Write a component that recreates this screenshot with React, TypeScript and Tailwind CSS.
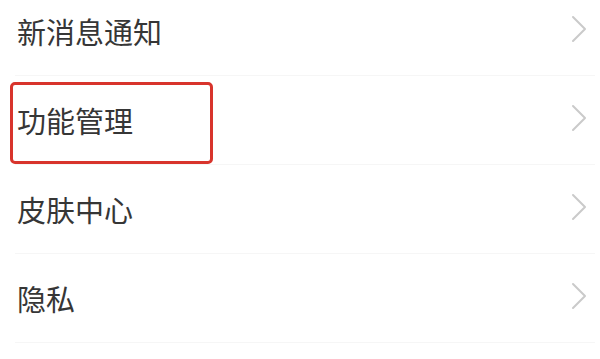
const items = ['新消息通知', '功能管理', '皮肤中心', '隐私'];

function Chevron() {
  return (
    <svg width="16" height="28" viewBox="0 0 16 28" fill="none">
      <polyline points="2,2 14,14 2,26" stroke="#cacaca" strokeWidth="2" strokeLinecap="round" strokeLinejoin="round" />
    </svg>
  );
}

export default function App() {
  return (
    <div className="w-[600px] h-[359px] overflow-hidden bg-white" style={{ fontFamily: '"Noto Sans CJK SC", "Noto Sans", sans-serif' }}>
      <div className="-mt-[13px]">
        {items.map((label, i) => (
          <div key={label} className="relative h-[89px]">
            <div className="flex h-full items-center justify-between pl-[17px] pr-[13px]">
              <span className="text-[29px] leading-none text-[#363636]">{label}</span>
              <span className="-mt-[5px]">
                <Chevron />
              </span>
            </div>
            <div className="absolute bottom-0 left-[15px] right-[5px] h-px bg-[#f6f6f6]" />
            {i === 1 && (
              <div className="absolute left-[10px] top-[6px] h-[82px] w-[203px] rounded-[5px] border-[3px] border-[#d8342c]" />
            )}
          </div>
        ))}
      </div>
    </div>
  );
}
